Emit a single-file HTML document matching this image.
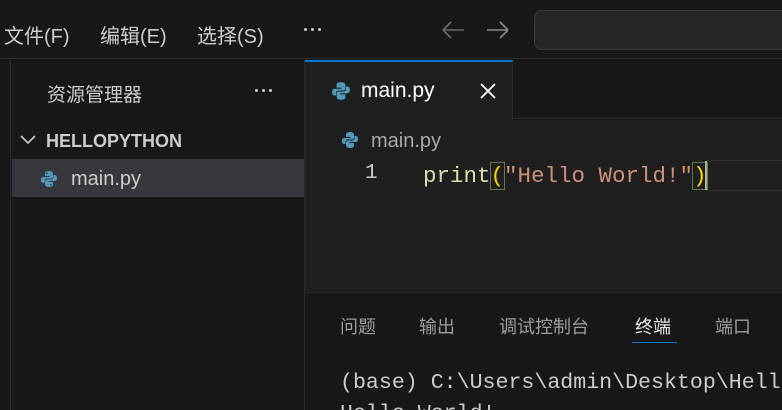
<!DOCTYPE html>
<html><head><meta charset="utf-8"><style>
*{margin:0;padding:0;box-sizing:border-box}
html,body{width:782px;height:410px;overflow:hidden}
body{background:#181818;position:relative;font-family:"Liberation Sans","Noto Sans CJK SC",sans-serif;color:#ccc}
.a{position:absolute;white-space:nowrap}
.mono{font-family:"Liberation Mono","DejaVu Sans Mono",monospace}
.dots{position:absolute;display:flex;gap:4px}
.dots i{width:3px;height:3px;border-radius:50%;background:#ccc;display:block}
</style></head><body>
<!-- title bar -->
<div class="a" style="left:0;top:0;width:782px;height:59px;background:#181818;border-bottom:1px solid #2b2b2b"></div>
<div class="a" style="left:4px;top:20px;font-size:20px;color:#ccc">文件(F)</div>
<div class="a" style="left:100px;top:20px;font-size:20px;color:#ccc">编辑(E)</div>
<div class="a" style="left:197px;top:20px;font-size:20px;color:#ccc">选择(S)</div>
<div class="dots" style="left:304px;top:28px"><i></i><i></i><i></i></div>
<svg class="a" style="left:440px;top:19px" width="80" height="22"><path d="M3 11H24M3 11L11 3M3 11L11 19" stroke="#6b6b6b" stroke-width="1.6" fill="none"/><path d="M47 11H68M68 11L60 3M68 11L60 19" stroke="#8a8a8a" stroke-width="1.6" fill="none"/></svg>
<div class="a" style="left:534px;top:10px;width:270px;height:40px;background:#262626;border:1px solid #3c3c3c;border-radius:8px"></div>
<!-- activity bar strip -->
<div class="a" style="left:0;top:60px;width:11px;height:350px;background:#181818;border-right:1px solid #2b2b2b"></div>
<!-- sidebar -->
<div class="a" style="left:11px;top:60px;width:294px;height:350px;background:#181818;border-right:1px solid #2b2b2b"></div>
<div class="a" style="left:47px;top:80px;font-size:19px;color:#ccc">资源管理器</div>
<div class="dots" style="left:255px;top:89px"><i></i><i></i><i></i></div>
<svg class="a" style="left:20px;top:134px" width="16" height="12"><path d="M1 2L8 9L15 2" stroke="#ccc" stroke-width="1.6" fill="none"/></svg>
<div class="a" style="left:46px;top:131px;font-size:18px;font-weight:bold;color:#ccc">HELLOPYTHON</div>
<div class="a" style="left:12px;top:159px;width:292px;height:38px;background:#37373d"></div>
<svg class="a" style="left:40px;top:170px" width="18" height="18" viewBox="0 0 18 18"><path d="M9 1C5 1 5 3 5 4V6H9.5V7H3C1.5 7 1 8.5 1 10C1 11.5 1.5 13 3 13H4.5V11C4.5 9.5 5.5 8.5 7 8.5H11C12.2 8.5 13 7.7 13 6.5V4C13 2 11.5 1 9 1Z" fill="#519aba"/><path d="M9 17C13 17 13 15 13 14V12H8.5V11H15C16.5 11 17 9.5 17 8C17 6.5 16.5 5 15 5H13.5V7C13.5 8.5 12.5 9.5 11 9.5H7C5.8 9.5 5 10.3 5 11.5V14C5 16 6.5 17 9 17Z" fill="#519aba"/><circle cx="7" cy="3.2" r=".8" fill="#37373d"/><circle cx="11" cy="14.8" r=".8" fill="#37373d"/></svg>
<div class="a" style="left:71px;top:168px;font-size:20px;color:#ccc">main.py</div>
<!-- tab bar -->
<div class="a" style="left:306px;top:60px;width:476px;height:59px;background:#181818;border-bottom:1px solid #2b2b2b"></div>
<div class="a" style="left:305px;top:60px;width:208px;height:60px;background:#1f1f1f;border-top:2px solid #0078d4;border-right:1px solid #2b2b2b"></div>
<svg class="a" style="left:331px;top:81px" width="20" height="20" viewBox="0 0 18 18"><path d="M9 1C5 1 5 3 5 4V6H9.5V7H3C1.5 7 1 8.5 1 10C1 11.5 1.5 13 3 13H4.5V11C4.5 9.5 5.5 8.5 7 8.5H11C12.2 8.5 13 7.7 13 6.5V4C13 2 11.5 1 9 1Z" fill="#519aba"/><path d="M9 17C13 17 13 15 13 14V12H8.5V11H15C16.5 11 17 9.5 17 8C17 6.5 16.5 5 15 5H13.5V7C13.5 8.5 12.5 9.5 11 9.5H7C5.8 9.5 5 10.3 5 11.5V14C5 16 6.5 17 9 17Z" fill="#519aba"/></svg>
<div class="a" style="left:361px;top:79px;font-size:21px;color:#fff">main.py</div>
<svg class="a" style="left:479px;top:82px" width="18" height="18"><path d="M2 2L16 16M16 2L2 16" stroke="#fff" stroke-width="1.8"/></svg>
<!-- editor -->
<div class="a" style="left:305px;top:120px;width:477px;height:172px;background:#1f1f1f"></div>
<svg class="a" style="left:341px;top:131px" width="18" height="18" viewBox="0 0 18 18"><path d="M9 1C5 1 5 3 5 4V6H9.5V7H3C1.5 7 1 8.5 1 10C1 11.5 1.5 13 3 13H4.5V11C4.5 9.5 5.5 8.5 7 8.5H11C12.2 8.5 13 7.7 13 6.5V4C13 2 11.5 1 9 1Z" fill="#519aba"/><path d="M9 17C13 17 13 15 13 14V12H8.5V11H15C16.5 11 17 9.5 17 8C17 6.5 16.5 5 15 5H13.5V7C13.5 8.5 12.5 9.5 11 9.5H7C5.8 9.5 5 10.3 5 11.5V14C5 16 6.5 17 9 17Z" fill="#519aba"/></svg>
<div class="a" style="left:371px;top:130px;font-size:20px;color:#a9a9a9">main.py</div>
<div class="a" style="left:706px;top:160px;width:80px;height:31px;border:1px solid #303030;border-left:none"></div>
<div class="a mono" style="left:365px;top:162px;font-size:21px;color:#ccc">1</div>
<div class="a mono" style="left:423px;top:162px;font-size:22.5px;line-height:28px"><span style="color:#dcdcaa">print</span><span style="color:#ffd700;outline:1px solid #5a7a50">(</span><span style="color:#ce9178">"Hello World!"</span><span style="color:#ffd700;outline:1px solid #5a7a50">)</span></div>
<div class="a" style="left:705px;top:161px;width:2px;height:29px;background:#aeafad"></div>
<!-- panel -->
<div class="a" style="left:305px;top:292px;width:477px;height:118px;background:#181818;border-top:1px solid #2b2b2b;overflow:hidden">
<div class="a" style="left:35px;top:20px;font-size:18px;color:#9d9d9d">问题</div>
<div class="a" style="left:114px;top:20px;font-size:18px;color:#9d9d9d">输出</div>
<div class="a" style="left:194px;top:20px;font-size:18px;color:#9d9d9d">调试控制台</div>
<div class="a" style="left:330px;top:20px;font-size:18px;color:#e7e7e7">终端</div>
<div class="a" style="left:327px;top:49px;width:45px;height:1px;background:#0078d4"></div>
<div class="a" style="left:410px;top:20px;font-size:18px;color:#9d9d9d">端口</div>
<div class="a mono" style="left:35px;top:75px;font-size:21.6px;color:#ccc;line-height:31px">(base) C:\Users\admin\Desktop\HelloPython&gt;<br>Hello World!</div>
</div>
</body></html>
